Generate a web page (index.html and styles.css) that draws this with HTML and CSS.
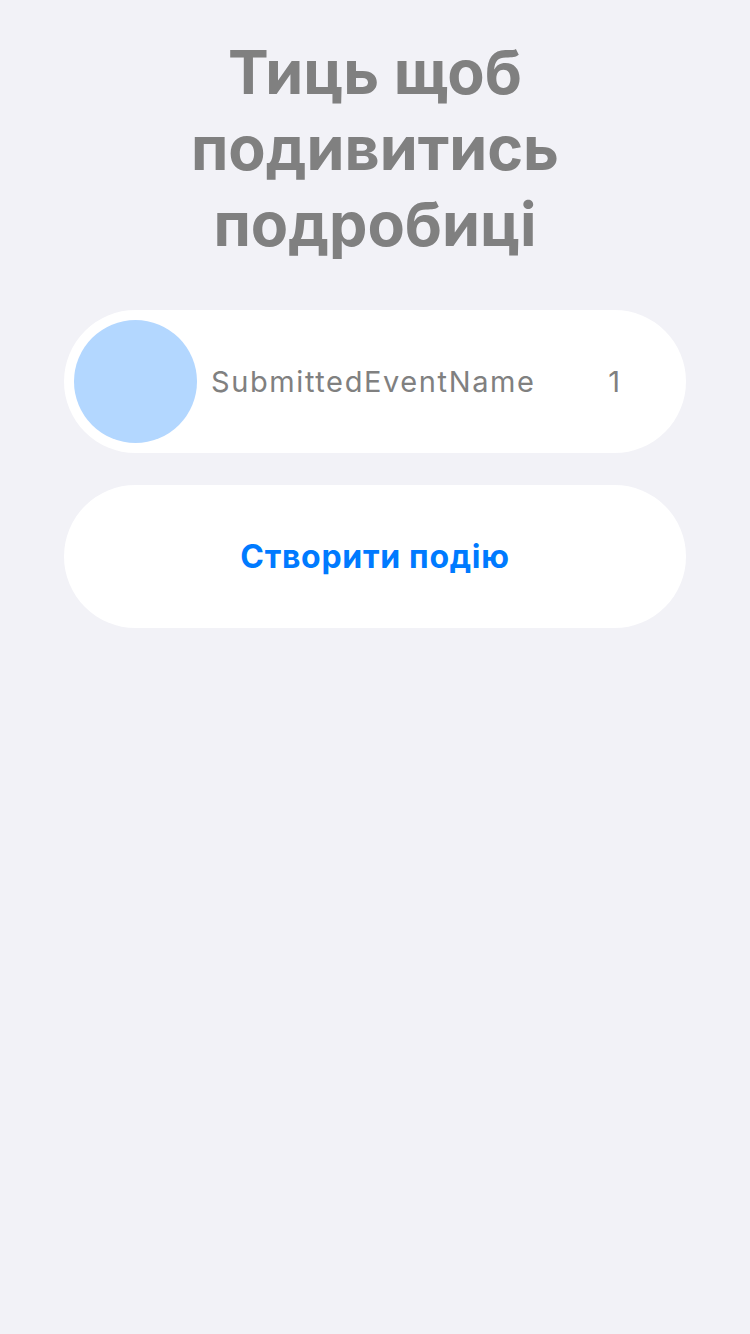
FILE: index.html
```html
<!DOCTYPE html>
<html lang="uk">
<head>
<meta charset="utf-8">
<link rel="stylesheet" href="styles.css">
</head>
<body>
<main class="page">
  <h1 class="title">Тиць щоб подивитись подробиці</h1>
  <div class="list">
    <div class="event-card">
      <div class="avatar"></div>
      <div class="event-name">SubmittedEventName</div>
      <div class="event-count">1</div>
    </div>
    <div class="create-btn">Створити подію</div>
  </div>
</main>
</body>
</html>
```
FILE: styles.css
```css
html, body {
  margin: 0;
  padding: 0;
  background: #f2f2f7;
}
body {
  width: 750px;
  height: 1334px;
  font-family: "Inter", "Noto Sans", sans-serif;
}
.page {
  display: flex;
  flex-direction: column;
  align-items: center;
  padding-top: 34px;
}
.title {
  margin: 0;
  width: 430px;
  text-align: center;
  font-size: 61px;
  line-height: 76px;
  font-weight: 700;
  color: #808080;
}
.list {
  margin-top: 48px;
  width: 622px;
  display: flex;
  flex-direction: column;
  gap: 32px;
}
.event-card {
  height: 143px;
  background: #fff;
  border-radius: 72px;
  display: flex;
  align-items: center;
  padding: 0 10px;
  box-sizing: border-box;
}
.avatar {
  width: 123px;
  height: 123px;
  border-radius: 50%;
  background: #b3d7ff;
  flex: none;
}
.event-name {
  margin-left: 14px;
  font-size: 29px;
  letter-spacing: 1.6px;
  color: #808080;
  flex: 1;
}
.event-count {
  font-size: 29px;
  color: #808080;
  margin-right: 56px;
}
.create-btn {
  height: 143px;
  background: #fff;
  border-radius: 72px;
  display: flex;
  align-items: center;
  justify-content: center;
  font-size: 32px;
  letter-spacing: 0.7px;
  font-weight: 700;
  color: #007aff;
}
```
